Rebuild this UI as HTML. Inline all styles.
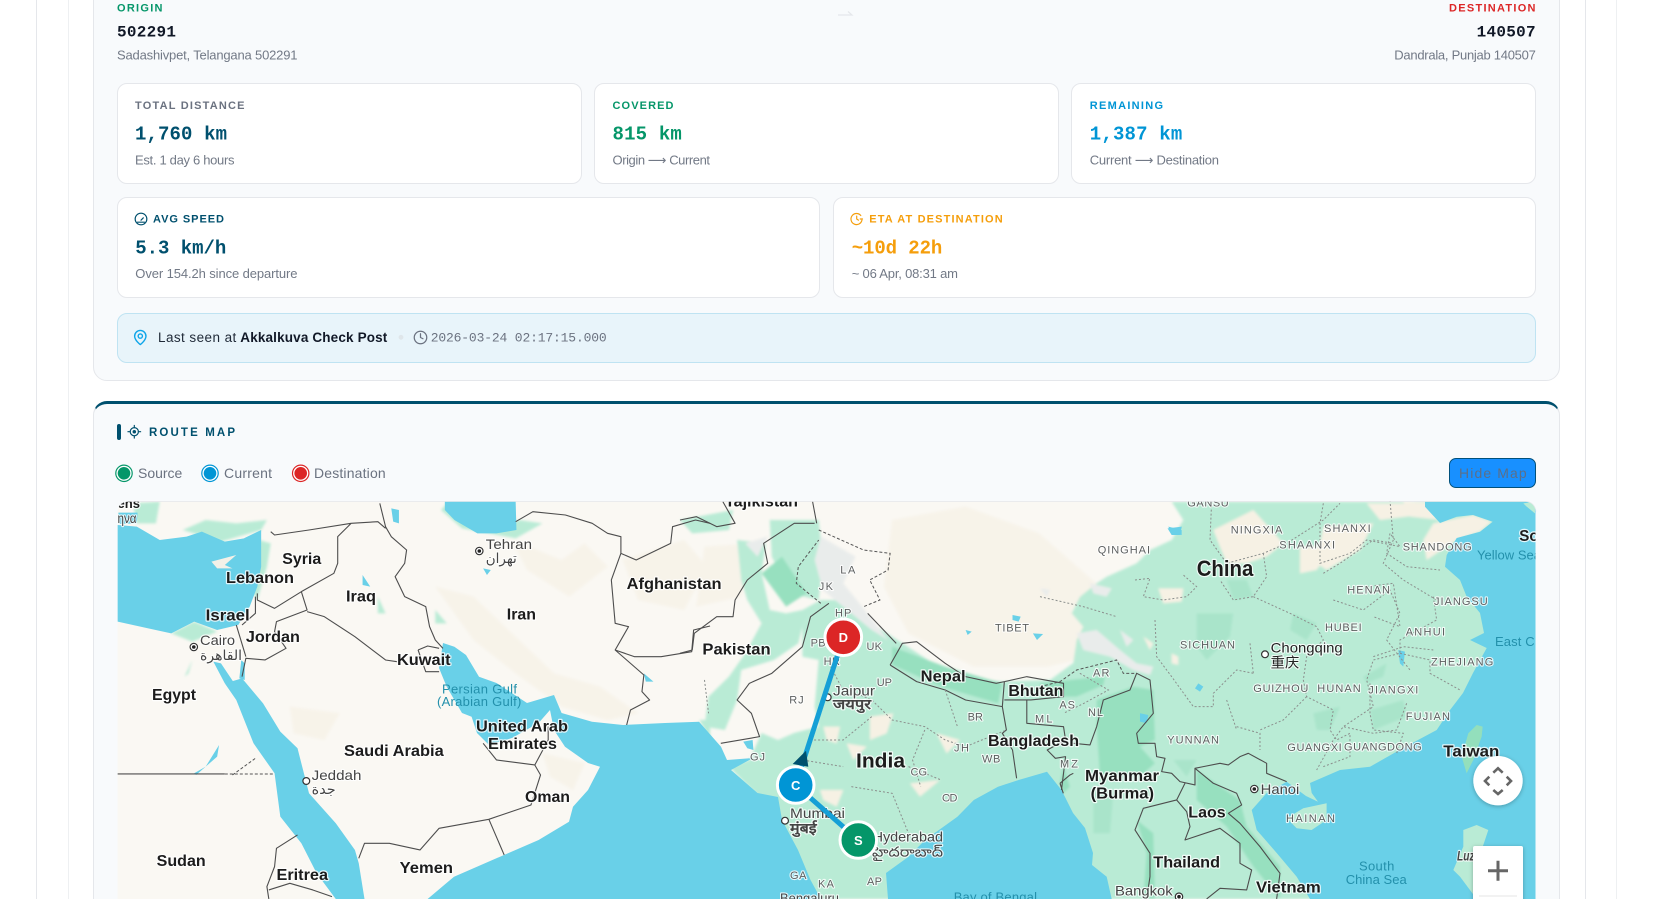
<!DOCTYPE html>
<html lang="en"><head><meta charset="utf-8"><title>Route Tracking</title>
<style>
html,body{margin:0;padding:0;width:1663px;height:899px;overflow:hidden;background:#fff}
#root{position:relative;width:1663px;height:899px;overflow:hidden;background:#fff}
.abs{position:absolute;box-sizing:border-box}
.card{background:#fff;border:1px solid #e5e7eb;border-radius:10px}
svg text{font-family:"Liberation Sans","Noto Sans CJK SC","DejaVu Sans",sans-serif}
.l{font-size:11px;font-weight:700}
.v{font-size:19px;font-weight:700;font-family:"Liberation Mono",monospace!important}
.s{font-size:13px;fill:#727986}
.b{fill:none;stroke:#4d4d4d;stroke-width:1.1;vector-effect:non-scaling-stroke;stroke-linejoin:round}
.d{fill:none;stroke:#8b8f8d;stroke-width:1;stroke-dasharray:2 2;vector-effect:non-scaling-stroke}
.dk{fill:none;stroke:#555;stroke-width:1;stroke-dasharray:3 2;vector-effect:non-scaling-stroke}
.c{font-size:16px;font-weight:700;fill:#1c1c1c;stroke:#fff;stroke-width:2.4;paint-order:stroke;stroke-linejoin:round;stroke-opacity:.8}
.t{font-size:14px;fill:#444;stroke:#fff;stroke-width:2.2;paint-order:stroke;stroke-linejoin:round;stroke-opacity:.8}
.p{font-size:11px;fill:#5c5f5f;stroke:#fff;stroke-width:2.2;paint-order:stroke;stroke-linejoin:round;stroke-opacity:.8}
.w{font-size:13px;fill:#2390ab}
.ic{fill:none;stroke-width:2;stroke-linecap:round;stroke-linejoin:round}
</style></head><body>
<div id="root">
<div class="abs" style="left:36px;top:0;width:1px;height:899px;background:#e5e7eb"></div>
<div class="abs" style="left:67.5px;top:0;width:1px;height:899px;background:#eef0f2"></div>
<div class="abs" style="left:1585px;top:0;width:1px;height:899px;background:#e5e7eb"></div>
<div class="abs" style="left:1616px;top:0;width:1px;height:899px;background:#eef0f2"></div>

<div class="abs" style="left:93px;top:-40px;width:1466.5px;height:421px;background:#f8fafc;border:1px solid #e5e7eb;border-radius:14px"></div>
<div class="abs card" style="left:117px;top:83px;width:464.5px;height:101px"></div>
<div class="abs card" style="left:594px;top:83px;width:464.5px;height:101px"></div>
<div class="abs card" style="left:1071px;top:83px;width:464.5px;height:101px"></div>
<div class="abs card" style="left:117px;top:197px;width:703px;height:101px"></div>
<div class="abs card" style="left:833px;top:197px;width:702.5px;height:101px"></div>
<div class="abs" style="left:117px;top:313px;width:1418.5px;height:50px;background:#e8f4fa;border:1px solid #bfe3f2;border-radius:10px"></div>

<div class="abs" style="left:93px;top:401px;width:1466.5px;height:540px;background:#f8fafc;border:1px solid #e5e7eb;border-top:3px solid #00506e;border-radius:14px"></div>
<div class="abs" style="left:117px;top:424px;width:4px;height:16px;background:#00506e;border-radius:2px"></div>
<div class="abs" style="left:1449px;top:458px;width:87px;height:30px;background:#1890ff;border:1px solid #00507c;border-radius:7px"></div>

<svg class="abs" style="left:0;top:0" width="1663" height="899" viewBox="0 0 1663 899" xmlns="http://www.w3.org/2000/svg">
<defs><clipPath id="mc"><path d="M127.5 501.7H1525.5a10 10 0 0 1 10 10V899H117.5V511.7a10 10 0 0 1 10-10Z"/></clipPath>
<filter id="sh" x="-30%" y="-30%" width="160%" height="160%"><feDropShadow dx="0" dy="1" stdDeviation="2" flood-opacity=".28"/></filter>
<filter id="bl" x="0" y="0" width="100%" height="100%"><feGaussianBlur stdDeviation="1.2"/></filter></defs>

<!-- top stats -->
<text class="l" x="117" y="11.3" textLength="45.5" fill="#059669">ORIGIN</text>
<text class="v" style="font-size:16px" x="117" y="36.5" textLength="59" fill="#111827">502291</text>
<text class="s" x="117" y="59.5" textLength="180.5">Sadashivpet, Telangana 502291</text>
<path d="M838 15H852L848 11.5" fill="none" stroke="#e5e7eb" stroke-width="1.2"/>
<text class="l" x="1449" y="11.3" textLength="86.5" fill="#dc2626">DESTINATION</text>
<text class="v" style="font-size:16px" x="1476.6" y="36.5" textLength="59" fill="#111827">140507</text>
<text class="s" x="1394.3" y="59.5" textLength="141.5">Dandrala, Punjab 140507</text>

<text class="l" x="135" y="109" textLength="109.5" fill="#6b7280">TOTAL DISTANCE</text>
<text class="v" x="135" y="139.3" textLength="92" fill="#00506e">1,760 km</text>
<text class="s" x="135" y="164.5" textLength="99.5">Est. 1 day 6 hours</text>
<text class="l" x="612.5" y="109" textLength="61" fill="#059669">COVERED</text>
<text class="v" x="612.5" y="139.3" textLength="69.3" fill="#059669">815 km</text>
<text class="s" x="612.5" y="164.5" textLength="97.5">Origin ⟶ Current</text>
<text class="l" x="1089.8" y="109" textLength="73.2" fill="#0095d5">REMAINING</text>
<text class="v" x="1089.8" y="139.3" textLength="92.5" fill="#0095d5">1,387 km</text>
<text class="s" x="1089.8" y="164.5" textLength="129.2">Current ⟶ Destination</text>

<svg x="134" y="212" width="14" height="14" viewBox="0 0 24 24"><circle class="ic" stroke="#00506e" cx="12" cy="12" r="10"/><path class="ic" stroke="#00506e" d="m12 14 4-4M6 17.5h12"/></svg>
<text class="l" x="153" y="222.3" textLength="71" fill="#00506e">AVG SPEED</text>
<text class="v" x="135.3" y="253.3" textLength="91" fill="#00506e">5.3 km/h</text>
<text class="s" x="135.3" y="278" textLength="162.2">Over 154.2h since departure</text>
<svg x="849.7" y="212" width="14" height="14" viewBox="0 0 24 24"><path class="ic" stroke="#f59e0b" d="M21 14a9.5 9.5 0 1 1-2-8M12 7v5l3 2M18 12h4"/></svg>
<text class="l" x="869.3" y="222.3" textLength="133.4" fill="#f59e0b">ETA AT DESTINATION</text>
<text class="v" x="851.7" y="253.3" textLength="90.6" fill="#f59e0b">~10d 22h</text>
<text class="s" x="851.7" y="278" textLength="106.3">~ 06 Apr, 08:31 am</text>

<svg x="131.8" y="329" width="17" height="17" viewBox="0 0 24 24"><path class="ic" stroke="#0ea5e9" d="M20 10c0 6-8 12-8 12s-8-6-8-12a8 8 0 0 1 16 0Z"/><circle class="ic" stroke="#0ea5e9" cx="12" cy="10" r="3"/></svg>
<text x="158" y="342" textLength="78.3" style="font-size:13.5px" fill="#1f2937">Last seen at</text>
<text x="240.3" y="342" textLength="147" style="font-size:13.5px;font-weight:700" fill="#111827">Akkalkuva Check Post</text>
<circle cx="401" cy="337.3" r="2.4" fill="#dfe6ea"/>
<svg x="413" y="330" width="15" height="15" viewBox="0 0 24 24"><circle class="ic" stroke="#6b7280" cx="12" cy="12" r="10"/><path class="ic" stroke="#6b7280" d="M12 6v6l4 2"/></svg>
<text x="430.7" y="341.7" textLength="176" style="font-size:13px;font-family:'Liberation Mono',monospace" fill="#6b7280">2026-03-24 02:17:15.000</text>

<!-- header -->
<svg x="127.3" y="424.7" width="14" height="14" viewBox="0 0 24 24"><g class="ic" stroke="#00506e"><circle cx="12" cy="12" r="7"/><path d="M12 1v4M12 19v4M1 12h4M19 12h4"/></g><circle cx="12" cy="12" r="3" fill="#00506e"/></svg>
<text x="149" y="436" textLength="86" style="font-size:11.5px;font-weight:700" fill="#00506e">ROUTE MAP</text>
<circle cx="124" cy="473.3" r="8.2" fill="#fff" stroke="#059669" stroke-width="1.2"/><circle cx="124" cy="473.3" r="6.3" fill="#059669"/>
<text x="138" y="478" textLength="44.3" style="font-size:14px" fill="#6b7280">Source</text>
<circle cx="210" cy="473.3" r="8.2" fill="#fff" stroke="#0095d5" stroke-width="1.2"/><circle cx="210" cy="473.3" r="6.3" fill="#0095d5"/>
<text x="224" y="478" textLength="48" style="font-size:14px" fill="#6b7280">Current</text>
<circle cx="300.7" cy="473.3" r="8.2" fill="#fff" stroke="#dc2626" stroke-width="1.2"/><circle cx="300.7" cy="473.3" r="6.3" fill="#dc2626"/>
<text x="314" y="478" textLength="71.7" style="font-size:14px" fill="#6b7280">Destination</text>
<text x="1459" y="478" textLength="67.7" style="font-size:14px" fill="#5c6f88">Hide Map</text>
<path d="M127.5 501.7H1525.5a10 10 0 0 1 10 10" fill="none" stroke="#e5e7eb" stroke-width="1.5"/>

<!-- MAP -->
<g clip-path="url(#mc)">
<rect x="117" y="501" width="1419" height="398" fill="#faf8f3"/>
<g filter="url(#bl)">
<!-- tan areas -->
<g fill="#f7f3e9">
<g transform="translate(110,500) scale(.3827,.3333)">
<path d="M850 260 950 290 1050 400 1160 520 1280 560 1380 640 1300 660 1180 620 1060 520 950 420ZM1340 180 1500 120 1560 200 1500 330 1380 300ZM470 620 600 640 560 720 480 700ZM1130 760 1240 790 1210 870 1150 830ZM1050 120 1180 180 1240 130 1300 200 1200 290 1090 210Z"/>
</g>
<g transform="translate(680,500) scale(.408,.3333)">
<path d="M520 60 700 20 880 100 1020 250 960 330 1040 460 900 500 720 500 560 400 500 260ZM60 140 180 130 150 290 40 320Z"/>
</g>
</g>
<!-- greens -->
<path fill="#b9ebd5" d="M1171.7 501.7 1183.3 520 1171.7 540 1150 550 1136.7 563.3 1106.7 576.7 1096.7 583.3 1080 596.7 1071.7 613.3 1083.3 626.7 1076.7 640 1073.3 663 1050 680 1047 680 1002.3 681.7 965.6 676.7 933 663.3 902.4 643.3 871.8 623.3 835 600 820.8 600 802.4 626.7 802.4 656.7 818.7 660 814.6 706.7 818.7 726.7 794 733 778 740 761.6 733 749.4 760 729 766.7 761.6 800 802.4 899H1536V501.7Z"/>
<g transform="translate(680,500) scale(.408,.3333)" fill="#b9ebd5">
<path d="M345 300 300 330 260 340 220 330 200 220 210 130 140 120 150 240 165 300 200 370 160 460 120 530 70 590 60 680 110 690 140 600 150 510 230 480 290 430 300 380Z"/>
<path d="M220 60 340 60 350 180 340 300 270 280 225 170Z"/>
<path d="M0 60 130 30 120 90 30 100Z"/>
</g>
<g transform="translate(110,500) scale(.3827,.3333)" fill="#b9ebd5">
<path d="M60 10 130 5 120 70 70 70ZM190 90 290 125 395 90 410 60 330 70 250 60ZM390 120 420 130 410 200 385 300 375 280ZM160 400 220 365 280 395 215 425ZM865 30 920 85 1060 115 1130 70 1070 60 980 90 905 55 880 10ZM195 530 215 480 205 520ZM850 330 880 370 850 370ZM700 290 720 340 700 340ZM1540 660 1568 720 1568 660Z"/>
</g>
<!-- tan over green -->
<g fill="#f6f1e4">
<g transform="translate(1040,500) scale(.3333)">
<path d="M520 90 640 30 730 130 680 170 620 190 560 190ZM850 80 1000 70 960 150 860 210 830 190ZM355 265 430 265 425 305 370 310ZM310 410 340 430 330 450ZM395 460 415 470 415 495 395 490ZM1090 5 1200 10 1200 60 1110 50Z"/>
</g>
<g transform="translate(1300,440) scale(.3333)">
<path d="M400 250 520 225 575 245 540 275 470 300 380 360 370 300ZM200 190 340 190 360 225 240 240ZM0 320 100 320 50 390 0 400Z"/>
</g>
<g transform="translate(780,620) scale(.3333)">
<path d="M270 290 340 280 320 340 270 360ZM130 320 180 320 170 370 140 360ZM390 490 480 480 420 530ZM200 370 260 380 220 420ZM120 510 190 510 170 560 130 540ZM470 340 540 360 500 400Z"/>
</g>
</g>
<!-- dark green -->
<g fill="#97e0bf">
<g transform="translate(1040,500) scale(.3333)">
<path d="M170 600 280 560 340 570 345 720 300 740 345 790 300 830 180 830 170 680ZM470 810 600 900 620 980 720 1100 720 1197 640 1100 560 980 470 900ZM290 960 340 1000 345 1197 310 1197 320 1060ZM0 550 90 540 195 530 190 555 110 590 0 590ZM70 800 90 860 70 880 60 850Z"/>
</g>
<g transform="translate(680,500) scale(.408,.3333)">
<path d="M520 440 650 500 790 550 780 610 640 560 520 495ZM200 220 250 170 310 280 260 320Z"/>
</g>
</g>
<g fill="#a9e4ca" transform="translate(1040,500) scale(.3333)">
<path d="M470 340 580 340 570 410 500 480 470 440ZM760 340 830 370 800 420 750 390ZM970 530 1040 490 1030 530 980 550ZM820 640 900 620 870 690 830 690ZM620 240 560 240 580 300 640 290ZM990 630 1090 600 1100 650 1000 690ZM400 780 470 780 440 830ZM160 880 220 880 210 1000 160 1000Z"/>
</g>
<!-- snow -->
<g fill="#e9eceb">
<g transform="translate(1040,500) scale(.3333)">
<path d="M110 400 170 390 240 450 290 490 340 500 330 525 280 510 210 470 130 450ZM150 250 215 265 200 290 160 280ZM240 390 280 420 260 440ZM0 265 30 270 20 290Z"/>
</g>
<g transform="translate(680,500) scale(.408,.3333)">
<path d="M345 110 430 170 400 250 440 310 510 420 470 390 400 320 350 270 330 180ZM160 130 215 110 190 170Z"/>
</g>
</g>
</g>
<!-- water -->
<g fill="#69d0e8">
<path d="M443 643 454.4 646.7 466 655 479 676.7 496.5 683 527 703 554 695 561.6 713 592 721.7 623 725 665 723 699 721.7 721 746.7 727 760 753 758 731 770 757.5 793 778 797 782 820 798 850 810.5 880 821 899H427.6L454 876.7 504 855 538.6 840 569 821.7 573 806.7 588 790 600 766.7 588 763 565 746.7 554 730 550 710 538.6 723 512 738 489 745 477 733 471.6 716.7 462 713 446.7 686.7 439 668Z"/>
<path d="M888 899 886 873 908.5 856.7 925 840 957.4 816.7 973.8 800 998 786.7 1018.6 780 1047 771.7 1061.5 790 1063 793 1073 813 1085 828 1093 853 1092 865 1106.7 876.7 1111.7 899Z"/>
<path d="M1425 501.7 1425 506.7 1440 523 1456.7 516.7 1473 515 1492.7 521.7 1480 531.7 1456.7 538 1446.7 555 1445 566.7 1460 580 1466.7 596.7 1480 613 1484 633 1470 640 1486.7 648 1473 673 1463 693 1450 710 1436.7 730 1403 748 1370 766.7 1340 770 1310 783 1311.7 793 1318 801.7 1306 796 1286.7 781.7 1266.7 793 1251.7 810 1256.7 830 1276.7 853 1296.7 876.7 1310 899H1536V501.7Z"/>
<g transform="translate(110,500) scale(.3827,.3333)">
<path d="M20 75 70 80 130 120 200 110 240 95 300 125 350 115 395 90 395 200 385 260 365 320 335 375 280 390 220 365 160 400 100 385 20 365Z"/>
<path d="M300 550 345 535 400 610 445 695 490 745 520 880 590 970 640 1050 650 1090 665 1197H590L540 1120 500 1030 445 950 430 820 375 730 330 600Z"/>
<path d="M270 485 290 490 325 550 300 550ZM343 480 352 490 352 540 338 535Z"/>
<path d="M875 5H1060L1062 90 1010 100 960 100 900 60 875 30Z"/>
<path d="M22 38 72 38 70 70 22 72ZM735 25 755 30 755 70 740 65ZM975 205 995 210 985 225ZM660 225 680 260 660 255ZM1395 520 1420 545 1400 545Z"/>
<path d="M220 820 250 800 285 735 280 770 240 810 225 825Z"/>
</g>
<g transform="translate(1040,500) scale(.3333)"><path d="M385 80 425 90 425 105 395 102ZM1075 450 1095 455 1090 500 1080 490ZM475 550 490 560 480 575 465 565ZM300 640 325 645 320 670 300 665Z"/></g>
<g transform="translate(680,500) scale(.408,.3333)"><path d="M155 725 178 720 180 750 165 745ZM815 345 835 350 830 365 815 360ZM865 400 890 402 875 420ZM1195 85 1230 80 1225 105 1205 105ZM700 390 715 395 705 405Z"/></g>
</g>
<!-- islands -->
<g fill="#f3f1e8" transform="translate(110,500) scale(.3827,.3333)"><path d="M265 185 330 165 300 195 320 205 280 205Z"/></g>
<g fill="#b9ebd5">
<g transform="translate(1040,500) scale(.3333)"><path d="M740 955 790 925 860 910 860 960 815 990 770 985Z"/></g>
<g transform="translate(1300,440) scale(.3333)"><path d="M490 1170 530 1155 565 1170 545 1230 525 1240 530 1377 480 1310 460 1290 490 1220ZM670 190 705 185 705 220 680 200Z"/><path d="M530 855 548 860 545 890 520 960 500 1000 485 950 505 880Z" fill="#93dfbc"/></g>
</g>
<!-- borders zoom-5 space -->
<g transform="translate(110,500) scale(.3827,.3333)">
<path class="b" d="M420 95 430 105 520 90 630 70 700 65 720 85M705 10 720 80 735 110 775 150 770 190 745 230 770 290 825 320 835 380 850 420 870 445M630 70 595 110 595 190 585 220 500 275 430 325 385 300 385 280M500 275 515 330 435 365 430 395 460 445 405 480 355 475 345 530M515 335 560 350 640 410 720 480 750 485M805 450 830 438 860 445M805 450 825 515 860 515M330 375 355 470M380 290 380 340 345 375M20 822H300M490 1005 435 1045 430 1100 410 1160 415 1197M415 1170 470 1150 530 1170 580 1190M650 1075 665 1030 730 1030 810 1050 860 985 990 958 1100 915 1125 825 1110 795M990 958 1030 1065M975 730 1010 780 1110 795 1145 720 1145 680M1060 65 1105 35 1190 45 1260 70 1300 100 1335 110 1335 160 1375 180 1465 130 1470 80 1530 60 1568 70M1335 160 1310 240 1320 370 1355 380 1320 450 1395 525 1390 575 1410 600 1360 630 1350 675M1320 450 1370 470 1440 470 1520 455 1525 390 1568 378"/>
<path class="dk" d="M300 822H430M320 825 380 775"/>
</g>
<!-- borders zoom-6 space -->
<g transform="translate(680,500) scale(.408,.3333)">
<path class="b" d="M0 460 30 450 35 400 90 350 130 350 135 300 165 240 215 190 205 130 280 70 330 70M0 60 40 50 90 80 135 70 105 5M325 5 335 70M365 310 320 350 300 440 225 520 170 550 140 600 175 640 195 710 100 730M460 340 530 430M515 495 545 430 580 425 650 490 700 530 775 550 795 545M515 495 580 545 650 570 700 600 790 620 795 545M795 545 850 530 940 550 940 590 860 600 795 600M790 620 800 690 790 700 815 750 825 835M850 600 850 670 940 680 945 720 900 750 920 775 945 770 935 870"/>
<path class="dk" d="M345 310 285 250 290 200 340 120M340 90 450 150 515 160 510 210 465 240 490 300 450 320"/>
<path class="d" d="M60 540 70 640M365 490 395 560 470 600 520 660 600 680 650 720 700 740 800 690M600 690 570 780 590 860M470 650 400 720 320 720 300 780 400 800M560 800 600 820 640 840M420 860 520 880 560 1000M980 520 1050 570 990 610 940 640M650 570 680 680"/>
</g>
<!-- borders zoom-8 space -->
<g transform="translate(1040,500) scale(.3333)">
<path class="b" d="M100 730 150 735 170 680 190 600 270 570 290 520 330 540 340 640 290 700 295 730 345 730 350 770 375 775 365 815 395 820 420 845 465 855 465 805 490 800 540 790 565 795 600 770 625 760 680 790 680 820 740 845M465 805 520 850 590 880 605 915 565 940 600 970 660 1040 720 1120 710 1197M435 850 410 900 310 925 285 990 330 1060 330 1130 320 1197M410 900 440 935 450 980 435 1020 540 985 600 1030 600 1090 635 1110 620 1170 540 1165 500 1197M60 850 70 880M100 820 90 825 60 850"/>
<path class="dk" d="M0 560 60 545 110 510 230 480 250 520 290 520"/>
<path class="d" d="M285 240 330 235 310 290 370 300 440 290 470 260 430 225M0 290 130 320 230 350M345 360 350 470 395 530 460 620 520 620 520 580 590 510 640 520M630 430 640 520M590 680 660 700 660 750M560 600 590 690M670 160 680 230 640 290 580 300 540 240M640 290 750 340 830 380 850 420 800 470 790 540 800 590 880 630 870 690 890 720 930 700 930 770 850 800M800 590 730 660 660 690M990 550 990 640 1000 690 1090 700 1070 760M1000 470 1090 440 1180 450M1050 0 1060 120 1030 190 1090 240 1190 300 1200 310M880 300 970 330 1050 270 1080 340 1040 420 1110 510M850 220 900 190 1000 120 1060 130M515 5 510 120 560 190 670 160 740 130 850 60 900 10"/>
</g>
<g transform="translate(1300,440) scale(.3333)">
<path class="d" d="M70 190 60 250 60 370 150 340 200 300 300 320 270 280 260 340 320 380 420 390M200 440 280 430 300 560 220 530M400 470 410 540 300 600 300 640 220 660 200 720 220 800 130 860M300 640 390 660 390 700 480 750M320 790 290 870 220 880 130 860 100 900 50 990"/>
</g>

<!-- water labels -->
<text class="w" x="442" y="693.3" textLength="75">Persian Gulf</text>
<text class="w" x="437" y="706" textLength="84.4">(Arabian Gulf)</text>
<text class="w" x="1477" y="559.3" textLength="64">Yellow Sea</text>
<text class="w" x="1495" y="646" textLength="92">East China Sea</text>
<text class="w" x="1359" y="870.7" textLength="35.3">South</text>
<text class="w" x="1345.7" y="884" textLength="61">China Sea</text>
<text class="w" x="953.7" y="901.7" textLength="83.3">Bay of Bengal</text>

<!-- countries -->
<g>
<text class="c" x="282.2" y="564" textLength="39" lengthAdjust="spacingAndGlyphs">Syria</text>
<text class="c" x="226" y="583" textLength="68" lengthAdjust="spacingAndGlyphs">Lebanon</text>
<text class="c" x="205.7" y="620.7" textLength="44" lengthAdjust="spacingAndGlyphs">Israel</text>
<text class="c" x="245.9" y="642" textLength="54" lengthAdjust="spacingAndGlyphs">Jordan</text>
<text class="c" x="152" y="700" textLength="44" lengthAdjust="spacingAndGlyphs">Egypt</text>
<text class="c" x="346" y="601.7" textLength="30" lengthAdjust="spacingAndGlyphs">Iraq</text>
<text class="c" x="506.8" y="619.3" textLength="29.2" lengthAdjust="spacingAndGlyphs">Iran</text>
<text class="c" x="397" y="665" textLength="53.6" lengthAdjust="spacingAndGlyphs">Kuwait</text>
<text class="c" x="344" y="756" textLength="99.7" lengthAdjust="spacingAndGlyphs">Saudi Arabia</text>
<text class="c" x="476" y="731.7" textLength="92" lengthAdjust="spacingAndGlyphs">United Arab</text>
<text class="c" x="488" y="749" textLength="69" lengthAdjust="spacingAndGlyphs">Emirates</text>
<text class="c" x="525" y="802" textLength="45" lengthAdjust="spacingAndGlyphs">Oman</text>
<text class="c" x="399.7" y="873" textLength="53.3" lengthAdjust="spacingAndGlyphs">Yemen</text>
<text class="c" x="156.7" y="866" textLength="49" lengthAdjust="spacingAndGlyphs">Sudan</text>
<text class="c" x="276.5" y="880" textLength="51.5" lengthAdjust="spacingAndGlyphs">Eritrea</text>
<text class="c" x="626.6" y="589" textLength="95" lengthAdjust="spacingAndGlyphs">Afghanistan</text>
<text class="c" x="702.4" y="654.7" textLength="68.2" lengthAdjust="spacingAndGlyphs">Pakistan</text>
<text class="c" x="920.7" y="681.7" textLength="44.9" lengthAdjust="spacingAndGlyphs">Nepal</text>
<text class="c" x="1008.4" y="696" textLength="55" lengthAdjust="spacingAndGlyphs">Bhutan</text>
<text class="c" x="988" y="746" textLength="91" lengthAdjust="spacingAndGlyphs">Bangladesh</text>
<text class="c" style="font-size:20px" x="856" y="767.3" textLength="49" lengthAdjust="spacingAndGlyphs">India</text>
<text class="c" style="font-size:22px" x="1196.7" y="576" textLength="56.6" lengthAdjust="spacingAndGlyphs">China</text>
<text class="c" x="1085" y="781" textLength="74" lengthAdjust="spacingAndGlyphs">Myanmar</text>
<text class="c" x="1090.7" y="798.3" textLength="63.3" lengthAdjust="spacingAndGlyphs">(Burma)</text>
<text class="c" x="1188.3" y="817.3" textLength="37.4" lengthAdjust="spacingAndGlyphs">Laos</text>
<text class="c" x="1153.3" y="867.7" textLength="66.7" lengthAdjust="spacingAndGlyphs">Thailand</text>
<text class="c" x="1256" y="892.7" textLength="64.7" lengthAdjust="spacingAndGlyphs">Vietnam</text>
<text class="c" x="1443.3" y="756.7" textLength="56" lengthAdjust="spacingAndGlyphs">Taiwan</text>
<text class="c" x="1519.3" y="541" textLength="90" lengthAdjust="spacingAndGlyphs">South Korea</text>
<text class="c" x="725" y="506.7" textLength="73" lengthAdjust="spacingAndGlyphs">Tajikistan</text>
<text class="c" style="font-size:14px" x="117.5" y="508" textLength="22.5" lengthAdjust="spacingAndGlyphs">ens</text>
<text class="t" x="117.5" y="523" textLength="19" lengthAdjust="spacingAndGlyphs">ηνα</text>
<text class="t" style="font-style:italic;font-weight:700" x="1457" y="860.7" textLength="30" lengthAdjust="spacingAndGlyphs">Luzon</text>
</g>
<!-- cities -->
<g>
<text class="t" x="485.8" y="549" textLength="46.2" lengthAdjust="spacingAndGlyphs">Tehran</text>
<text class="t" x="485.8" y="563" textLength="31" lengthAdjust="spacingAndGlyphs">تهران</text>
<text class="t" x="200" y="645" textLength="35" lengthAdjust="spacingAndGlyphs">Cairo</text>
<text class="t" x="200" y="660" textLength="42" lengthAdjust="spacingAndGlyphs">القاهرة</text>
<text class="t" x="311.7" y="780" textLength="49.7" lengthAdjust="spacingAndGlyphs">Jeddah</text>
<text class="t" x="311.7" y="794" textLength="24" lengthAdjust="spacingAndGlyphs">جدة</text>
<text class="t" x="833" y="695.7" textLength="42" lengthAdjust="spacingAndGlyphs">Jaipur</text>
<text class="t" style="font-weight:700" x="833" y="709" textLength="38" lengthAdjust="spacingAndGlyphs">जयपुर</text>
<text class="t" x="790" y="818" textLength="55" lengthAdjust="spacingAndGlyphs">Mumbai</text>
<text class="t" style="font-weight:700" x="790" y="833" textLength="26.7" lengthAdjust="spacingAndGlyphs">मुंबई</text>
<text class="t" x="872.6" y="841.7" textLength="70.4" lengthAdjust="spacingAndGlyphs">Hyderabad</text>
<text class="t" x="872" y="856.7" textLength="71" lengthAdjust="spacingAndGlyphs">హైదరాబాద్</text>
<text class="t" x="1260.7" y="794" textLength="38.6" lengthAdjust="spacingAndGlyphs">Hanoi</text>
<text class="t" x="1115" y="895.7" textLength="57.7" lengthAdjust="spacingAndGlyphs">Bangkok</text>
<text class="t" style="fill:#222" x="1270.7" y="652.3" textLength="72" lengthAdjust="spacingAndGlyphs">Chongqing</text>
<text class="t" style="fill:#222" x="1270.7" y="667.7" textLength="28.6" lengthAdjust="spacingAndGlyphs">重庆</text>
</g>
<!-- city dots -->
<g fill="#fff" stroke="#333" stroke-width="1.2">
<circle cx="306.3" cy="781" r="3.4"/><circle cx="827.7" cy="697.3" r="3.4"/><circle cx="785" cy="820.7" r="3.4"/><circle cx="1265" cy="654.3" r="3.4"/>
<circle cx="479.3" cy="551" r="3.7"/><circle cx="193.8" cy="647" r="3.7"/><circle cx="1254.3" cy="789" r="3.7"/><circle cx="1179" cy="896.7" r="3.7"/>
</g>
<g fill="#222"><circle cx="479.3" cy="551" r="1.8"/><circle cx="193.8" cy="647" r="1.8"/><circle cx="1254.3" cy="789" r="1.8"/><circle cx="1179" cy="896.7" r="1.8"/></g>
<!-- provinces -->
<text class="p" x="1187.3" y="506.7" textLength="41.4">GANSU</text>
<text class="p" x="1230.7" y="533.3" textLength="51.6">NINGXIA</text>
<text class="p" x="1324" y="532" textLength="46.7">SHANXI</text>
<text class="p" x="1279.3" y="548.7" textLength="55.7">SHAANXI</text>
<text class="p" x="1097.7" y="553.3" textLength="52.3">QINGHAI</text>
<text class="p" x="1402.7" y="550.7" textLength="69">SHANDONG</text>
<text class="p" x="1347.3" y="593.3" textLength="42.7">HENAN</text>
<text class="p" x="1434" y="605" textLength="53.7">JIANGSU</text>
<text class="p" x="1325" y="631" textLength="36.7">HUBEI</text>
<text class="p" x="1405.7" y="635.7" textLength="39.3">ANHUI</text>
<text class="p" x="1180" y="648.3" textLength="55">SICHUAN</text>
<text class="p" x="1431" y="665.7" textLength="62.3">ZHEJIANG</text>
<text class="p" x="1253.3" y="692" textLength="55">GUIZHOU</text>
<text class="p" x="1317.3" y="692" textLength="43.4">HUNAN</text>
<text class="p" x="1368.3" y="693.3" textLength="50">JIANGXI</text>
<text class="p" x="1405.7" y="720" textLength="44.3">FUJIAN</text>
<text class="p" x="1167.3" y="743.3" textLength="51.7">YUNNAN</text>
<text class="p" x="1287.3" y="751" textLength="54.4">GUANGXI</text>
<text class="p" x="1344" y="750.3" textLength="77.7">GUANGDONG</text>
<text class="p" x="1286" y="822" textLength="49">HAINAN</text>
<text class="p" x="995" y="631.7" textLength="34">TIBET</text>
<text class="p" x="840.3" y="573.3" textLength="15.1">LA</text>
<text class="p" x="818.7" y="590" textLength="14.3">JK</text>
<text class="p" x="835" y="616.7" textLength="16.4">HP</text>
<text class="p" x="810.6" y="646.7" textLength="15">PB</text>
<text class="p" x="866.5" y="650" textLength="15.5">UK</text>
<text class="p" x="823.6" y="665" textLength="16.4">HR</text>
<text class="p" x="876.7" y="686" textLength="15.3">UP</text>
<text class="p" x="789.3" y="703.3" textLength="14.3">RJ</text>
<text class="p" x="967.6" y="720.7" textLength="15.4">BR</text>
<text class="p" x="954" y="751.7" textLength="15">JH</text>
<text class="p" x="982" y="762.3" textLength="18.3">WB</text>
<text class="p" x="910.5" y="775.7" textLength="16.5">CG</text>
<text class="p" x="942" y="801.7" textLength="15.4">OD</text>
<text class="p" x="750" y="760.7" textLength="15">GJ</text>
<text class="p" x="790" y="879" textLength="16.5">GA</text>
<text class="p" x="818" y="887.3" textLength="16">KA</text>
<text class="p" x="867" y="885" textLength="15">AP</text>
<text class="p" x="1059.4" y="708.3" textLength="15.6">AS</text>
<text class="p" x="1035" y="722.7" textLength="17.5">ML</text>
<text class="p" x="1088" y="716" textLength="15">NL</text>
<text class="p" x="1093" y="676.7" textLength="16.4">AR</text>
<text class="p" x="1060" y="767.7" textLength="18">MZ</text>
<text class="t" x="780" y="903" textLength="59" lengthAdjust="spacingAndGlyphs">Bengaluru</text>

<!-- route -->
<path d="M843.3 637.3 795.7 785" fill="none" stroke="#159fd6" stroke-width="5"/>
<path d="M795.7 785 858.3 840" fill="none" stroke="#159fd6" stroke-width="5"/>
<path d="M806 750.7 792.7 764 808.3 766.7Z" fill="#00506e"/>
<g stroke="#fff" stroke-width="3">
<circle cx="843.3" cy="637.3" r="18.3" fill="#dc2626"/>
<circle cx="795.7" cy="785" r="18.3" fill="#0095d5"/>
<circle cx="858.3" cy="840" r="18.3" fill="#059669"/>
</g>
<g font-size="13" font-weight="700" fill="#fff" text-anchor="middle">
<text x="843.3" y="642">D</text><text x="795.7" y="790">C</text><text x="858.3" y="845">S</text>
</g>

<!-- controls -->
<circle cx="1498" cy="780.7" r="24.7" fill="#fff" filter="url(#sh)"/>
<path d="M1493.3 772.7 1498 768.3 1502.7 772.7M1493.3 790 1498 794 1502.7 790M1489.3 776.7 1485 781 1489.3 785.3M1506.7 776.7 1511 781 1506.7 785.3" fill="none" stroke="#666" stroke-width="2.6"/>
<rect x="1473" y="846" width="50" height="70" rx="2" fill="#fff" filter="url(#sh)"/>
<path d="M1488 870.7H1508M1498 860.7V880.7" stroke="#666" stroke-width="3" fill="none"/>
<path d="M1479 896H1517" stroke="#e6e6e6" stroke-width="1"/>
</g>
</svg>
</div>
</body></html>
